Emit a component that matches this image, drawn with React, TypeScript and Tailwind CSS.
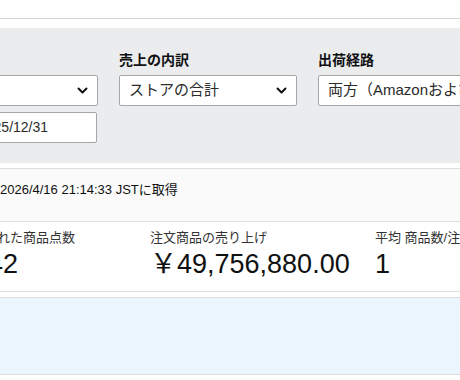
import React from 'react';

const font = { fontFamily: '"Liberation Sans", Arial, "Noto Sans CJK JP", sans-serif' };

const Chevron = () => (
  <svg width="11" height="7" viewBox="0 0 11 7" className="shrink-0">
    <polyline points="1.5,1.5 5.5,5.5 9.5,1.5" fill="none" stroke="#0f1111" strokeWidth="2" strokeLinecap="round" strokeLinejoin="round" />
  </svg>
);

const SelectBox: React.FC<{ value?: string; chevron?: boolean }> = ({ value, chevron = true }) => (
  <div className="h-[31px] bg-white border border-[#a6a6a6] rounded-[2px] flex items-center justify-between pl-[9px] pr-[9px] overflow-hidden">
    <span className="text-[15px] text-[#2b2b2b] whitespace-nowrap">{value}</span>
    {chevron && <Chevron />}
  </div>
);

const filters = [
  { label: '期間', value: '' },
  { label: '売上の内訳', value: 'ストアの合計' },
  { label: '出荷経路', value: '両方（Amazonおよび出品者）', noChevron: true },
];

const metrics = [
  { label: '注文された商品点数', value: '1842', w: 'w-[192px]' },
  { label: '注文商品の売り上げ', value: '￥49,756,880.00', w: 'w-[225px]' },
  { label: '平均 商品数/注文品目', value: '1', w: 'w-[200px]' },
];

export default function App() {
  return (
    <div className="w-[460px] h-[380px] overflow-hidden bg-white text-[#0f1111]" style={font}>
      <div className="h-[19px] border-b border-[#d5d5d5]" />
      <div className="h-[9px]" />

      {/* filters */}
      <div className="h-[135px] bg-[#ebecee] overflow-hidden">
        <div className="flex gap-[21px] ml-[-80px] pt-[18px]">
          {filters.map((f) => (
            <div key={f.label} className="w-[178px] shrink-0">
              <div className="h-[29px] text-[14px] font-bold leading-[29px] whitespace-nowrap">{f.label}</div>
              <SelectBox value={f.value} chevron={!f.noChevron} />
              {f.label === '期間' && (
                <div className="flex justify-end mt-[6px] pr-[1px]">
                  <div className="w-[130px] h-[31px] bg-white border border-[#a6a6a6] rounded-[2px] flex items-center pl-[10px] text-[14px] text-[#2b2b2b]">
                    2025/12/31
                  </div>
                </div>
              )}
            </div>
          ))}
        </div>
      </div>

      <div className="h-[5px]" />
      <div className="h-[54px] bg-[#fafafa] border-y border-[#dddddd] pt-[11px] text-[13px] text-[#0f1111] whitespace-nowrap">
        2026/4/16 21:14:33 JSTに取得
      </div>

      {/* metrics */}
      <div className="h-[70px] border-b border-[#dddddd] overflow-hidden">
        <div className="flex ml-[-42px] pt-[6px]">
          {metrics.map((m) => (
            <div key={m.label} className={`${m.w} shrink-0 whitespace-nowrap`}>
              <div className="text-[13px] leading-[20px] text-[#333]">{m.label}</div>
              <div className="text-[27px] leading-[32px] text-[#0f1111]">{m.value}</div>
            </div>
          ))}
        </div>
      </div>

      <div className="h-[5px]" />
      <div className="h-[78px] bg-[#eaf5fe] border-y border-[#dddddd]" />
    </div>
  );
}
